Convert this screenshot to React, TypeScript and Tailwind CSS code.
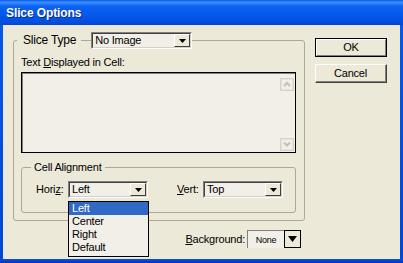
import React from 'react';

// small black down triangle used in the combo buttons
const Tri = ({ w = 7, h = 4 }: { w?: number; h?: number }) => (
  <svg width={w} height={h} viewBox={`0 0 ${w} ${h}`}>
    <polygon points={`0,0 ${w},0 ${w / 2},${h}`} fill="#000" />
  </svg>
);

const Combo: React.FC<{ value: string; width: string }> = ({ value, width }) => (
  <div
    className={`${width} h-[17px] flex border-t border-l border-t-[#808080] border-l-[#808080] border-r border-b border-r-white border-b-white`}
  >
    <div className="flex-1 flex border-t border-l border-t-[#404040] border-l-[#404040] border-r border-b border-r-[#D4D0C8] border-b-[#D4D0C8] bg-[#F1EFE7]">
      <span className="flex-1 pl-[2px] leading-[13px] whitespace-nowrap">{value}</span>
      <div className="w-[16px] h-full flex items-center justify-center border-t border-l border-t-white border-l-white border-r border-b border-r-[#404040] border-b-[#404040] bg-[#ECE9D8]">
        <Tri />
      </div>
    </div>
  </div>
);

const ScrollArrow: React.FC<{ down?: boolean }> = ({ down }) => (
  <svg width="14" height="13" viewBox="0 0 14 13">
    <rect x="0.5" y="0.5" width="13" height="12" fill="none" stroke="#D6D3C6" />
    <rect x="1.5" y="1.5" width="11" height="10" fill="none" stroke="#E6E4DA" />
    {down ? (
      <polyline points="4,4.5 7,7.5 10,4.5" fill="none" stroke="#C4C1B3" strokeWidth="2" />
    ) : (
      <polyline points="4,8 7,5 10,8" fill="none" stroke="#C4C1B3" strokeWidth="2" />
    )}
  </svg>
);

export default function App() {
  return (
    <div className="w-[403px] h-[263px] flex flex-col overflow-hidden font-['Liberation_Sans',Arial,sans-serif] text-[11px] tracking-[-0.2px] text-black select-none">
      {/* title bar */}
      <div className="h-[25px] shrink-0 flex items-center pl-[6px] bg-[linear-gradient(to_bottom,#0A5FEB_0%,#3C8DFE_10%,#0C62F2_25%,#0458EC_60%,#0450E0_85%,#0347D4_100%)]">
        <span className="text-white font-bold text-[12px] tracking-[-0.1px] [text-shadow:1px_1px_0_#0B2A8A]">Slice Options</span>
      </div>

      {/* frame */}
      <div className="flex-1 flex px-[3px] bg-[linear-gradient(to_bottom,#0458EC,#0147DA)]">
        <div className="flex-1 flex bg-[#ECE9D8]">
          {/* left column */}
          <div className="flex flex-col pl-[10px] pt-[15px]">
            <div className="relative w-[292px] h-[181px] border border-[#ACA899] rounded-[3px] pl-[7px] pt-[15px]">
              <div className="absolute top-[-9px] left-[3px] flex items-center">
                <span className="px-[6px] pr-[5px] leading-[13px] bg-[#ECE9D8] text-[12px]">Slice Type</span>
                <div className="w-[10px]" />
                <Combo value="No Image" width="w-[101px]" />
              </div>

              <div className="leading-[13px]">
                Text <span className="underline">D</span>isplayed in Cell:
              </div>

              {/* text area */}
              <div className="mt-[3px] w-[275px] h-[81px] border border-black">
                <div className="w-full h-full flex flex-col items-end justify-between border-t border-l border-[#808080] border-r-0 border-b-0 pt-[4px] pb-[1px] pr-[1px] bg-[#F1EFE7]">
                  <ScrollArrow />
                  <ScrollArrow down />
                </div>
              </div>

              {/* cell alignment */}
              <div className="relative mt-[14px] w-[275px] h-[46px] border border-[#ACA899] rounded-[3px] pl-[14px] pt-[13px]">
                <span className="absolute top-[-7px] left-[9px] px-[3px] leading-[13px] bg-[#ECE9D8]">Cell Alignment</span>
                <div className="flex items-center">
                  <span className="w-[32px] leading-[13px]">
                    Hori<span className="underline">z</span>:
                  </span>
                  <div className="relative">
                    <Combo value="Left" width="w-[80px]" />
                    <div className="absolute top-[20px] left-0 w-[81px] h-[56px] border border-black bg-[#F1EFE7] z-10">
                      <div className="h-[13px] leading-[13px] pl-[3px] bg-[#316AC5] text-white">Left</div>
                      <div className="h-[13px] leading-[13px] pl-[3px]">Center</div>
                      <div className="h-[13px] leading-[13px] pl-[3px]">Right</div>
                      <div className="h-[13px] leading-[13px] pl-[3px]">Default</div>
                    </div>
                  </div>
                  <span className="ml-[29px] w-[26px] leading-[13px]">
                    <span className="underline">V</span>ert:
                  </span>
                  <Combo value="Top" width="w-[80px]" />
                </div>
              </div>
            </div>

            {/* background */}
            <div className="mt-[9px] w-[292px] flex items-center justify-end pr-[4px]">
              <span className="leading-[13px] mr-[2px]">
                <span className="underline">B</span>ackground:
              </span>
              <div className="flex h-[18px]">
                <div className="w-[37px] flex items-center justify-center border-t border-l border-[#808080] border-r-0 border-b-0 bg-[#F1EFE7]">
                  <span className="text-[9px] leading-[10px]">None</span>
                </div>
                <div className="w-[17px] flex items-center justify-center border border-black bg-[#ECE9D8]">
                  <Tri w={9} h={6} />
                </div>
              </div>
            </div>
          </div>

          {/* buttons */}
          <div className="flex flex-col gap-[7px] pl-[10px] pt-[13px]">
            <button className="w-[72px] h-[19px] border border-black bg-[#ECE9D8]">
              <div className="w-full h-full flex items-center justify-center border-t border-l border-t-white border-l-white border-r border-b border-r-[#808080] border-b-[#808080] leading-[13px]">
                OK
              </div>
            </button>
            <button className="w-[72px] h-[19px] border-t border-l border-t-white border-l-white border-r border-b border-r-[#404040] border-b-[#404040] bg-[#ECE9D8]">
              <div className="w-full h-full flex items-center justify-center border-r border-b border-r-[#808080] border-b-[#808080] leading-[13px]">
                Cancel
              </div>
            </button>
          </div>
        </div>
      </div>
      {/* bottom frame */}
      <div className="h-[4px] shrink-0 bg-[linear-gradient(to_bottom,#0A4FE4,#0033B8)]" />
    </div>
  );
}
